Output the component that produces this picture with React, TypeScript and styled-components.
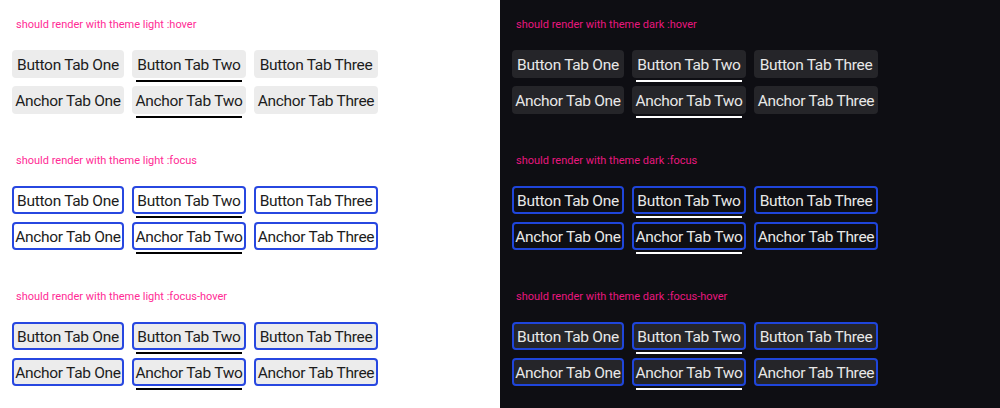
import React from "react";
import styled, { createGlobalStyle, css } from "styled-components";

const Global = createGlobalStyle`
  html, body { margin: 0; padding: 0; }
  body { width: 1000px; height: 408px; overflow: hidden; }
`;

type Mode = "light" | "dark";
type State = "hover" | "focus" | "focus-hover";

const palette = {
  light: { bg: "#ffffff", text: "#1c1c1c", hover: "#ececec", label: "#ff2b95", line: "#000000", focus: "#2747e0" },
  dark: { bg: "#0e0e13", text: "#e8e8e8", hover: "#252529", label: "#e8177f", line: "#ffffff", focus: "#1f45da" },
};

const Page = styled.div`
  display: grid;
  grid-template-columns: 500px 500px;
  height: 408px;
`;

const Panel = styled.div<{ $mode: Mode }>`
  background: ${(p) => palette[p.$mode].bg};
  padding: 16px 12px 0;
  display: flex;
  flex-direction: column;
  gap: 38px;
`;

const Section = styled.section`
  display: flex;
  flex-direction: column;
  gap: 18px;
`;

const Label = styled.div<{ $mode: Mode }>`
  font-family: Roboto, "Liberation Sans", sans-serif;
  font-size: 11px;
  line-height: 14px;
  height: 14px;
  padding: 2px 0 0 4px;
  color: ${(p) => palette[p.$mode].label};
`;

const Rows = styled.div`
  display: flex;
  flex-direction: column;
  gap: 8px;
`;

const TabRow = styled.div`
  display: flex;
  gap: 8px;
  height: 28px;
`;

const tabStyles = css<{ $mode: Mode; $state: State; $selected: boolean; $w: number }>`
  position: relative;
  box-sizing: border-box;
  width: ${(p) => p.$w}px;
  height: 28px;
  display: flex;
  align-items: center;
  justify-content: center;
  padding: 1px 0 0;
  border-radius: 4px;
  border: 2px solid ${(p) => (p.$state === "hover" ? "transparent" : palette[p.$mode].focus)};
  background: ${(p) => (p.$state === "focus" ? "transparent" : palette[p.$mode].hover)};
  color: ${(p) => palette[p.$mode].text};
  font-family: Roboto, "Liberation Sans", sans-serif;
  font-size: 15.5px;
  letter-spacing: -0.3px;
  white-space: nowrap;
  text-decoration: none;
  cursor: pointer;
  ${(p) =>
    p.$selected &&
    css`
      &::after {
        content: "";
        position: absolute;
        left: 2px;
        right: 2px;
        bottom: -6px;
        height: 2px;
        background: ${palette[p.$mode].line};
      }
    `}
`;

const ButtonTab = styled.button<{ $mode: Mode; $state: State; $selected: boolean; $w: number }>`
  ${tabStyles}
`;

const AnchorTab = styled.a<{ $mode: Mode; $state: State; $selected: boolean; $w: number }>`
  ${tabStyles}
`;

const widths = [112, 114, 124];
const names = ["One", "Two", "Three"];

function TabSet({ mode, state }: { mode: Mode; state: State }) {
  return (
    <Rows>
      <TabRow role="tablist">
        {names.map((n, i) => (
          <ButtonTab key={n} $mode={mode} $state={state} $selected={i === 1} $w={widths[i]}>
            Button Tab {n}
          </ButtonTab>
        ))}
      </TabRow>
      <TabRow role="tablist">
        {names.map((n, i) => (
          <AnchorTab key={n} href="#" $mode={mode} $state={state} $selected={i === 1} $w={widths[i]}>
            Anchor Tab {n}
          </AnchorTab>
        ))}
      </TabRow>
    </Rows>
  );
}

const states: State[] = ["hover", "focus", "focus-hover"];

export default function App() {
  return (
    <>
      <Global />
      <Page>
        {(["light", "dark"] as Mode[]).map((mode) => (
          <Panel key={mode} $mode={mode}>
            {states.map((s) => (
              <Section key={s}>
                <Label $mode={mode}>should render with theme {mode} :{s}</Label>
                <TabSet mode={mode} state={s} />
              </Section>
            ))}
          </Panel>
        ))}
      </Page>
    </>
  );
}
